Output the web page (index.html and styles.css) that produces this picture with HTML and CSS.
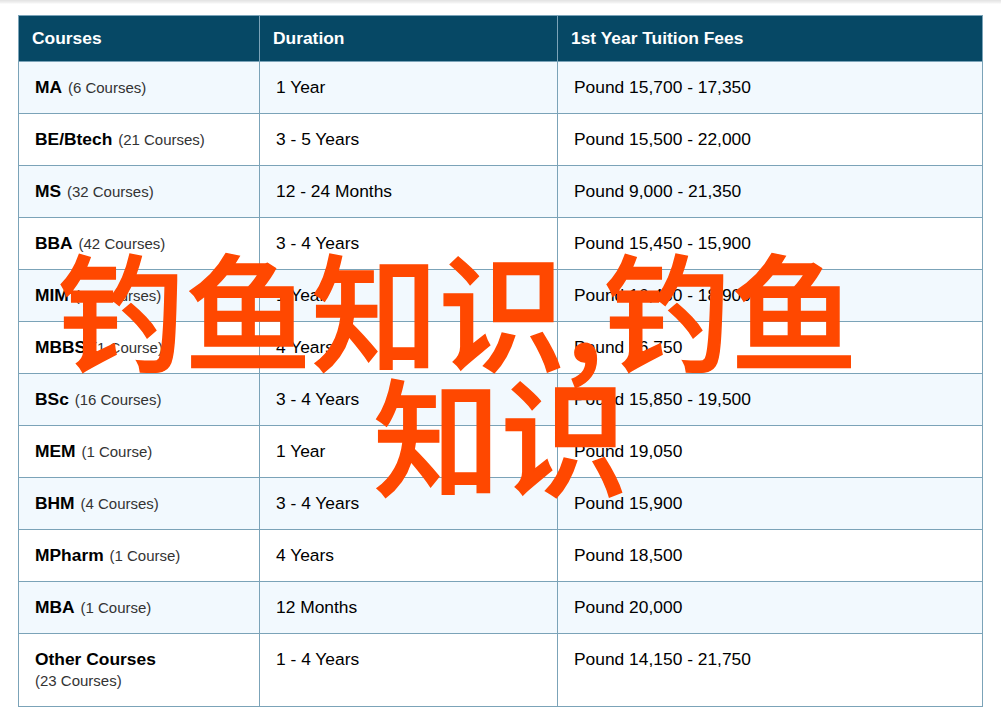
FILE: index.html
```html
<!DOCTYPE html>
<html lang="zh">
<head>
<meta charset="utf-8">
<title>Courses</title>
<link rel="stylesheet" href="styles.css">
</head>
<body>
<div class="page">
<table class="fees">
<colgroup><col class="c1"><col class="c2"><col class="c3"></colgroup>
<thead><tr><th>Courses</th><th>Duration</th><th>1st Year Tuition Fees</th></tr></thead>
<tbody>
<tr><td><b>MA</b> <small>(6 Courses)</small></td><td>1 Year</td><td>Pound 15,700 - 17,350</td></tr>
<tr><td><b>BE/Btech</b> <small>(21 Courses)</small></td><td>3 - 5 Years</td><td>Pound 15,500 - 22,000</td></tr>
<tr><td><b>MS</b> <small>(32 Courses)</small></td><td>12 - 24 Months</td><td>Pound 9,000 - 21,350</td></tr>
<tr><td><b>BBA</b> <small>(42 Courses)</small></td><td>3 - 4 Years</td><td>Pound 15,450 - 15,900</td></tr>
<tr><td><b>MIM</b> <small>(12 Courses)</small></td><td>1 Year</td><td>Pound 16,450 - 18,900</td></tr>
<tr><td><b>MBBS</b> <small>(1 Course)</small></td><td>4 Years</td><td>Pound 16,750</td></tr>
<tr><td><b>BSc</b> <small>(16 Courses)</small></td><td>3 - 4 Years</td><td>Pound 15,850 - 19,500</td></tr>
<tr><td><b>MEM</b> <small>(1 Course)</small></td><td>1 Year</td><td>Pound 19,050</td></tr>
<tr><td><b>BHM</b> <small>(4 Courses)</small></td><td>3 - 4 Years</td><td>Pound 15,900</td></tr>
<tr><td><b>MPharm</b> <small>(1 Course)</small></td><td>4 Years</td><td>Pound 18,500</td></tr>
<tr><td><b>MBA</b> <small>(1 Course)</small></td><td>12 Months</td><td>Pound 20,000</td></tr>
<tr class="tall"><td><b>Other Courses</b><br><small>(23 Courses)</small></td><td>1 - 4 Years</td><td>Pound 14,150 - 21,750</td></tr>
</tbody>
</table>
<div class="overlay"><div class="line-a">钓鱼知识,钓鱼</div><div class="line-b">知识</div></div>
</div>
</body>
</html>
```

FILE: styles.css
```css
html, body { margin: 0; padding: 0; background: #fff; }
body { width: 1001px; height: 720px; overflow: hidden; position: relative; font-family: "Liberation Sans", Arial, sans-serif; }
.page { padding: 15px 18px 0; height: 720px; box-sizing: border-box; background: linear-gradient(#e2e2e2, #f4f4f4 3px, #fff 4px); }
.fees { border-collapse: collapse; table-layout: fixed; width: 964px; color: #000; font-size: 17.4px; }
.c1 { width: 241px; } .c2 { width: 298px; } .c3 { width: 425px; }
.fees th, .fees td { border: 1px solid #7ba3b8; text-align: left; vertical-align: top; }
.fees th { height: 46px; box-sizing: border-box; background: #064865; color: #fff; font-weight: bold; font-size: 17.4px; line-height: 44px; padding: 0 13px; }
.fees td { height: 52px; box-sizing: border-box; padding: 14px 16px 0; line-height: 22px; }
.fees tbody tr:nth-child(odd) td { background: #f2f9fe; }
.fees small { font-size: 15px; color: #333; margin-left: 1px; }
.tall td { height: 73px; }
.tall small { margin-left: 0; vertical-align: 1px; }
.overlay { position: absolute; left: 0; right: 0; top: 245px; text-align: center; font-family: "Noto Sans CJK SC", sans-serif; font-weight: 500; font-size: 127px; line-height: 125px; color: #ff4800; -webkit-text-stroke: 1.5px #ff4800; white-space: nowrap; }
.line-a { padding-right: 86px; }
```
